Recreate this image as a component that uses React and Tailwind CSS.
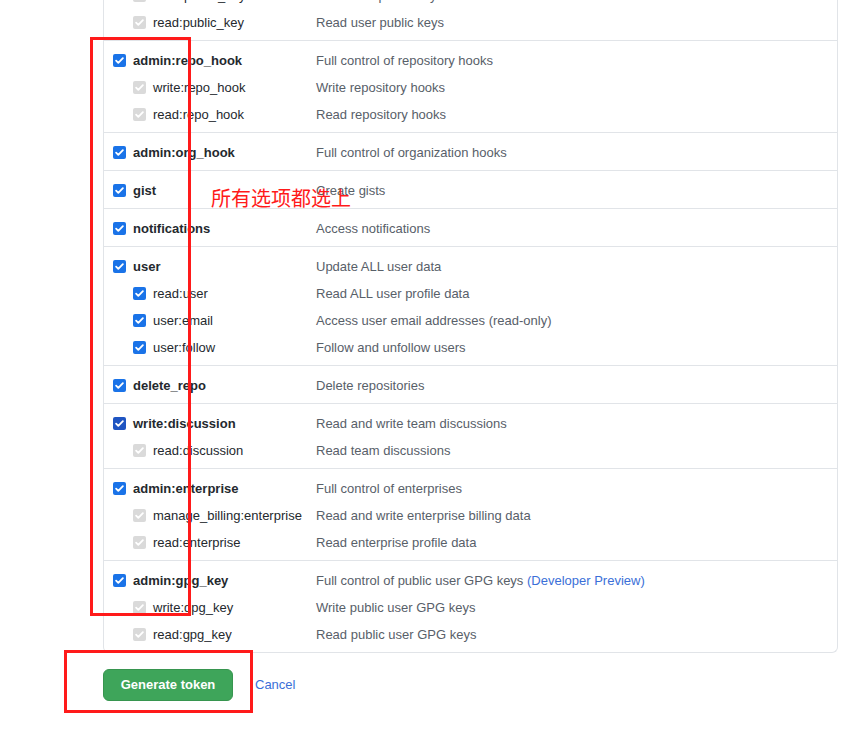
import React from 'react'

// scope groups; state: 'on' = checked blue, 'dark' = focused blue, 'off' = disabled gray
const GROUPS = [
  {
    parent: null,
    children: [
      { name: 'write:public_key', desc: 'Write user public keys' },
      { name: 'read:public_key', desc: 'Read user public keys' },
    ],
  },
  {
    parent: { name: 'admin:repo_hook', desc: 'Full control of repository hooks' },
    children: [
      { name: 'write:repo_hook', desc: 'Write repository hooks' },
      { name: 'read:repo_hook', desc: 'Read repository hooks' },
    ],
  },
  { parent: { name: 'admin:org_hook', desc: 'Full control of organization hooks' }, children: [] },
  { parent: { name: 'gist', desc: 'Create gists' }, children: [] },
  { parent: { name: 'notifications', desc: 'Access notifications' }, children: [] },
  {
    parent: { name: 'user', desc: 'Update ALL user data' },
    children: [
      { name: 'read:user', desc: 'Read ALL user profile data', active: true },
      { name: 'user:email', desc: 'Access user email addresses (read-only)', active: true },
      { name: 'user:follow', desc: 'Follow and unfollow users', active: true },
    ],
  },
  { parent: { name: 'delete_repo', desc: 'Delete repositories' }, children: [] },
  {
    parent: { name: 'write:discussion', desc: 'Read and write team discussions', dark: true },
    children: [{ name: 'read:discussion', desc: 'Read team discussions' }],
  },
  {
    parent: { name: 'admin:enterprise', desc: 'Full control of enterprises' },
    children: [
      { name: 'manage_billing:enterprise', desc: 'Read and write enterprise billing data' },
      { name: 'read:enterprise', desc: 'Read enterprise profile data' },
    ],
  },
  {
    parent: { name: 'admin:gpg_key', desc: 'Full control of public user GPG keys', preview: true },
    children: [
      { name: 'write:gpg_key', desc: 'Write public user GPG keys' },
      { name: 'read:gpg_key', desc: 'Read public user GPG keys' },
    ],
  },
]

function Check({ kind }) {
  const bg = kind === 'off' ? 'bg-[#dadada]' : kind === 'dark' ? 'bg-[#1f55c2]' : 'bg-[#1a73e8]'
  return (
    <span className={`w-[13px] h-[13px] rounded-[2px] flex items-center justify-center shrink-0 ${bg}`}>
      <svg width="11" height="11" viewBox="0 0 12 12" fill="none">
        <path d="M2.3 6.2l2.4 2.4 5-5.2" stroke="white" strokeWidth="2" strokeLinecap="round" strokeLinejoin="round" />
      </svg>
    </span>
  )
}

function Row({ item, sub }) {
  const kind = sub ? (item.active ? 'on' : 'off') : item.dark ? 'dark' : 'on'
  return (
    <div className="h-[27px] flex items-center">
      <div className={`w-[212px] flex items-center gap-[7px] ${sub ? 'pl-[29px]' : 'pl-[9px]'}`}>
        <Check kind={kind} />
        <span className={sub ? 'text-[#24292e]' : 'text-[#24292e] font-semibold'}>{item.name}</span>
      </div>
      <div className="text-[#586069]">
        {item.desc}
        {item.preview && <span className="text-[#3b6fd8]"> (Developer Preview)</span>}
      </div>
    </div>
  )
}

export default function App() {
  return (
    <div
      className="relative min-h-[737px] bg-white text-[13px] overflow-hidden"
      style={{ fontFamily: '"Liberation Sans", Arial, sans-serif' }}
    >
      <div className="pl-[103px] w-[838px]">
        <div className="-mt-[24px] border border-t-0 border-[#e1e4e8] rounded-b-md">
          {GROUPS.map((g, i) => (
            <div key={i} className={`pt-[6px] pb-[4px] ${i > 0 ? 'border-t border-[#e1e4e8]' : ''}`}>
              {g.parent && <Row item={g.parent} />}
              {g.children.map((c) => (
                <Row key={c.name} item={c} sub />
              ))}
            </div>
          ))}
        </div>

        <div className="mt-[16px] flex items-center gap-[22px]">
          <button className="h-[32px] w-[130px] rounded-md bg-[#3ea55a] border border-[#37954f] text-white font-bold text-[13px]">
            Generate token
          </button>
          <a className="text-[#3b6fd8]">Cancel</a>
        </div>
      </div>

      {/* red annotations */}
      <div className="absolute left-[90px] top-[37px] w-[101px] h-[579px] border-[3px] border-[#ff1a1a]" />
      <div className="absolute left-[64px] top-[650px] w-[189px] h-[63px] border-[3px] border-[#ff1a1a]" />
      <div
        className="absolute left-[211px] top-[185px] text-[20px] leading-[26px] text-[#ff1a1a]"
        style={{ fontFamily: '"Noto Sans CJK SC", sans-serif' }}
      >
        所有选项都选上
      </div>
    </div>
  )
}
